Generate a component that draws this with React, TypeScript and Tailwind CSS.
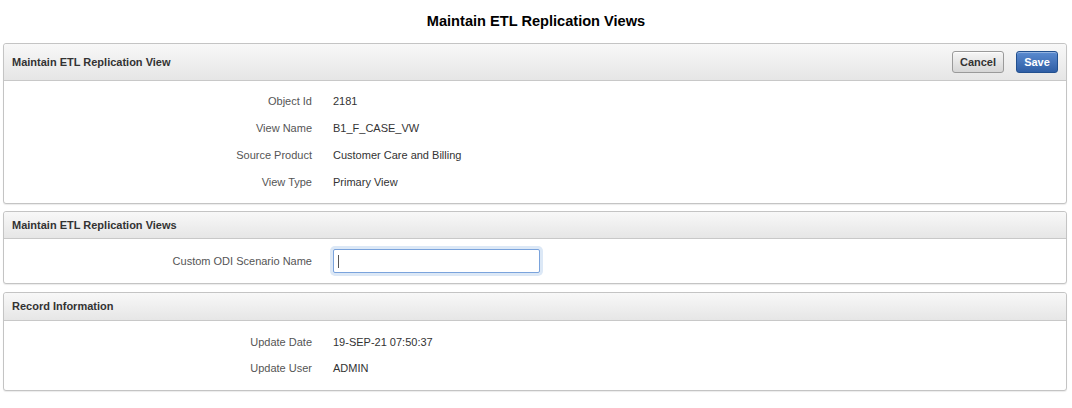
import React from "react";

const font = { fontFamily: '"Liberation Sans", Arial, sans-serif' };

function Row({ label, value, h = "h-[27px]" }: { label: string; value: string; h?: string }) {
  return (
    <div className={`flex ${h} items-center text-[11px]`}>
      <div className="w-[308px] text-right text-[#555555]">{label}</div>
      <div className="pl-[21px] text-[#333333]">{value}</div>
    </div>
  );
}

function Panel({
  title,
  headerH,
  children,
  actions,
}: {
  title: string;
  headerH: string;
  children: React.ReactNode;
  actions?: React.ReactNode;
}) {
  return (
    <div className="ml-[3px] mr-[5px] rounded-[3px] border border-[#c4c4c4] bg-white shadow-[0_1px_1px_rgba(0,0,0,0.08)]">
      <div
        className={`flex ${headerH} items-center justify-between rounded-t-[3px] border-b border-[#c8c8c8] bg-gradient-to-b from-[#f8f8f8] to-[#e6e6e6] pl-[8px] pr-[8px]`}
      >
        <div className="text-[11px] font-bold text-[#333333]">{title}</div>
        {actions}
      </div>
      {children}
    </div>
  );
}

export default function App() {
  return (
    <div style={font} className="w-[1072px] h-[408px] bg-white">
      <div className="flex h-[43px] items-center justify-center text-[14.6px] font-bold text-black">
        Maintain ETL Replication Views
      </div>
      <div className="flex flex-col gap-[7px]">
        <Panel
          title="Maintain ETL Replication View"
          headerH="h-[37px]"
          actions={
            <div className="flex gap-[12px]">
              <button className="h-[22px] w-[52px] rounded-[3px] border border-[#9a9a9a] bg-gradient-to-b from-[#f6f6f6] to-[#d6d6d6] text-[11px] font-bold text-[#333333] shadow-[inset_0_1px_0_rgba(255,255,255,0.8)]">
                Cancel
              </button>
              <button className="h-[22px] w-[42px] rounded-[3px] border border-[#22508f] bg-gradient-to-b from-[#5b8bd0] to-[#2f5ea5] text-[11px] font-bold text-white shadow-[inset_0_1px_0_rgba(255,255,255,0.35)]">
                Save
              </button>
            </div>
          }
        >
          <div className="py-[7px]">
            <Row label="Object Id" value="2181" />
            <Row label="View Name" value="B1_F_CASE_VW" />
            <Row label="Source Product" value="Customer Care and Billing" />
            <Row label="View Type" value="Primary View" />
          </div>
        </Panel>
        <Panel title="Maintain ETL Replication Views" headerH="h-[27px]">
          <div className="flex h-[44px] items-center text-[11px]">
            <div className="w-[308px] text-right text-[#555555]">Custom ODI Scenario Name</div>
            <div className="pl-[21px]">
              <div className="flex h-[24px] w-[207px] items-center rounded-[2px] border border-[#7aa3dc] bg-white pl-[4px] shadow-[0_0_0_3px_#dce8f6]">
                <div className="h-[13px] w-px bg-[#555555]" />
              </div>
            </div>
          </div>
        </Panel>
        <div className="mt-px">
          <Panel title="Record Information" headerH="h-[28px]">
            <div className="pt-[8px] pb-[9px]">
              <Row h="h-[26px]" label="Update Date" value="19-SEP-21 07:50:37" />
              <Row h="h-[26px]" label="Update User" value="ADMIN" />
            </div>
          </Panel>
        </div>
      </div>
    </div>
  );
}
